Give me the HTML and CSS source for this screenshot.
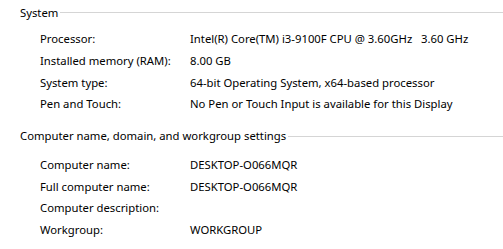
FILE: index.html
```html
<!DOCTYPE html>
<html>
  <head>
    <title>System</title>
    <link rel="stylesheet" href="styles.css">
  </head>
  <body>
    <div class="group">
      <div class="group-head">
        <span class="group-title">System</span>
        <span class="group-rule"></span>
      </div>
      <div class="props">
        <div class="label">Processor:</div>
        <div class="value">Intel(R) Core(TM) i3-9100F CPU @ 3.60GHz&nbsp;&nbsp;&nbsp;3.60 GHz</div>
        <div class="label">Installed memory (RAM):</div>
        <div class="value">8.00 GB</div>
        <div class="label">System type:</div>
        <div class="value">64-bit Operating System, x64-based processor</div>
        <div class="label">Pen and Touch:</div>
        <div class="value">No Pen or Touch Input is available for this Display</div>
      </div>
    </div>

    <div class="group second">
      <div class="group-head">
        <span class="group-title">Computer name, domain, and workgroup settings</span>
        <span class="group-rule"></span>
      </div>
      <div class="props">
        <div class="label">Computer name:</div>
        <div class="value">DESKTOP-O066MQR</div>
        <div class="label">Full computer name:</div>
        <div class="value">DESKTOP-O066MQR</div>
        <div class="label">Computer description:</div>
        <div class="value"></div>
        <div class="label">Workgroup:</div>
        <div class="value">WORKGROUP</div>
      </div>
    </div>
  </body>
</html>
```

FILE: styles.css
```css
body {
  margin: 0;
  padding: 2px 0 0 20px;
  font-family: "Noto Sans", sans-serif;
  font-size: 11.3px;
  color: #000;
  background-color: #fff;
}

.group-head {
  display: flex;
  align-items: center;
  height: 20px;
}

.group-title {
  white-space: nowrap;
}

.group-rule {
  flex: 1;
  height: 1px;
  margin-left: 2px;
  margin-top: 1px;
  background-color: #d5d5d5;
}

.props {
  display: grid;
  grid-template-columns: 150px 1fr;
  grid-auto-rows: 21.7px;
  align-items: center;
  padding: 6px 0 0 20px;
}

.label,
.value {
  white-space: nowrap;
}

.second {
  margin-top: 11px;
}

.second .props {
  padding-top: 8px;
}
```
